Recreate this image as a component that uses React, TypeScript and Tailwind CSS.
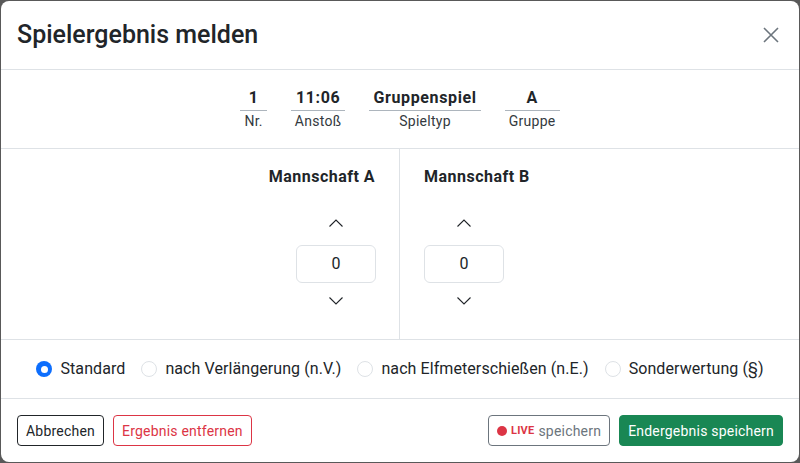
import React from 'react';

const infoItems = [
  { value: '1', label: 'Nr.' },
  { value: '11:06', label: 'Anstoß' },
  { value: 'Gruppenspiel', label: 'Spieltyp' },
  { value: 'A', label: 'Gruppe' },
];

const modes = ['Standard', 'nach Verlängerung (n.V.)', 'nach Elfmeterschießen (n.E.)', 'Sonderwertung (§)'];

const Chevron: React.FC<{ up?: boolean }> = ({ up }) => (
  <svg width="16" height="10" viewBox="0 0 16 10" fill="none" stroke="#212529" strokeWidth="1.1">
    {up ? <path d="M1.5 8.5 L8 2 L14.5 8.5" /> : <path d="M1.5 1.5 L8 8 L14.5 1.5" />}
  </svg>
);

const ScoreInput: React.FC = () => (
  <div className="flex flex-col items-center w-20">
    <button className="h-[30px] w-full flex items-center justify-center">
      <Chevron up />
    </button>
    <div className="mt-[7px] h-[38px] w-20 rounded-md border border-[#dee2e6] flex items-center justify-center text-base text-[#212529]">
      0
    </div>
    <button className="mt-[3px] h-[30px] w-full flex items-center justify-center">
      <Chevron />
    </button>
  </div>
);

const App: React.FC = () => {
  return (
    <div
      className="w-[800px] h-[463px] bg-[#595959] p-px"
      style={{ fontFamily: 'Roboto, "Liberation Sans", sans-serif' }}
    >
      <div className="h-full w-full bg-white rounded-lg flex flex-col overflow-hidden text-[#212529]">
        {/* Header */}
        <div className="h-[69px] border-b border-[#dee2e6] flex items-center justify-between pl-4 pr-4">
          <h1 className="text-[25px] font-medium leading-9">Spielergebnis melden</h1>
          <button className="w-6 h-6 flex items-center justify-center">
            <svg width="16" height="16" viewBox="0 0 16 16" stroke="#6c757d" strokeWidth="1.6">
              <path d="M1 1 L15 15 M15 1 L1 15" />
            </svg>
          </button>
        </div>

        {/* Match info */}
        <div className="h-[79px] border-b border-[#dee2e6] flex items-start justify-center gap-6 pt-4">
          {infoItems.map((it) => (
            <div key={it.label} className="flex flex-col items-stretch text-center">
              <div className="text-base font-bold leading-6 border-b border-[#adb5bd] px-1 tracking-[0.04em]">
                {it.value}
              </div>
              <div className="text-sm leading-[21px] px-1 text-[#343a40] tracking-[0.02em]">{it.label}</div>
            </div>
          ))}
        </div>

        {/* Teams */}
        <div className="h-[191px] border-b border-[#dee2e6] grid grid-cols-2">
          <div className="border-r border-[#dee2e6] flex flex-col items-end pr-6 pt-4">
            <div className="text-base font-bold leading-6 tracking-[0.03em]">Mannschaft A</div>
            <div className="mt-[19px] mr-[-1px]">
              <ScoreInput />
            </div>
          </div>
          <div className="flex flex-col items-start pl-6 pt-4">
            <div className="text-base font-bold leading-6 tracking-[0.03em]">Mannschaft B</div>
            <div className="mt-[19px]">
              <ScoreInput />
            </div>
          </div>
        </div>

        {/* Result type */}
        <div className="h-[59px] border-b border-[#dee2e6] flex items-center justify-center gap-4 text-base tracking-[0.005em]">
          {modes.map((m, i) => (
            <label key={m} className="flex items-center gap-2">
              {i === 0 ? (
                <span className="w-4 h-4 rounded-full bg-[#0d6efd] flex items-center justify-center">
                  <span className="w-[7px] h-[7px] rounded-full bg-white" />
                </span>
              ) : (
                <span className="w-4 h-4 rounded-full border border-[#dee2e6] bg-white" />
              )}
              <span>{m}</span>
            </label>
          ))}
        </div>

        {/* Footer */}
        <div className="flex-1 flex items-center justify-between px-4 text-sm tracking-[0.015em]">
          <div className="flex items-center gap-[9px]">
            <button className="h-[31px] px-2 rounded border border-[#212529] text-[#212529]">
              Abbrechen
            </button>
            <button className="h-[31px] px-2 rounded border border-[#dc3545] text-[#dc3545]">
              Ergebnis entfernen
            </button>
          </div>
          <div className="flex items-center gap-[9px]">
            <button className="h-[31px] px-2 rounded border border-[#6c757d] text-[#6c757d] flex items-center">
              <span className="w-[10px] h-[10px] rounded-full bg-[#dc3545] mr-1" />
              <span className="text-[11px] font-bold text-[#dc3545] mr-1">LIVE</span>
              speichern
            </button>
            <button className="h-[31px] px-2 rounded bg-[#198754] border border-[#198754] text-white">
              Endergebnis speichern
            </button>
          </div>
        </div>
      </div>
    </div>
  );
};

export default App;
